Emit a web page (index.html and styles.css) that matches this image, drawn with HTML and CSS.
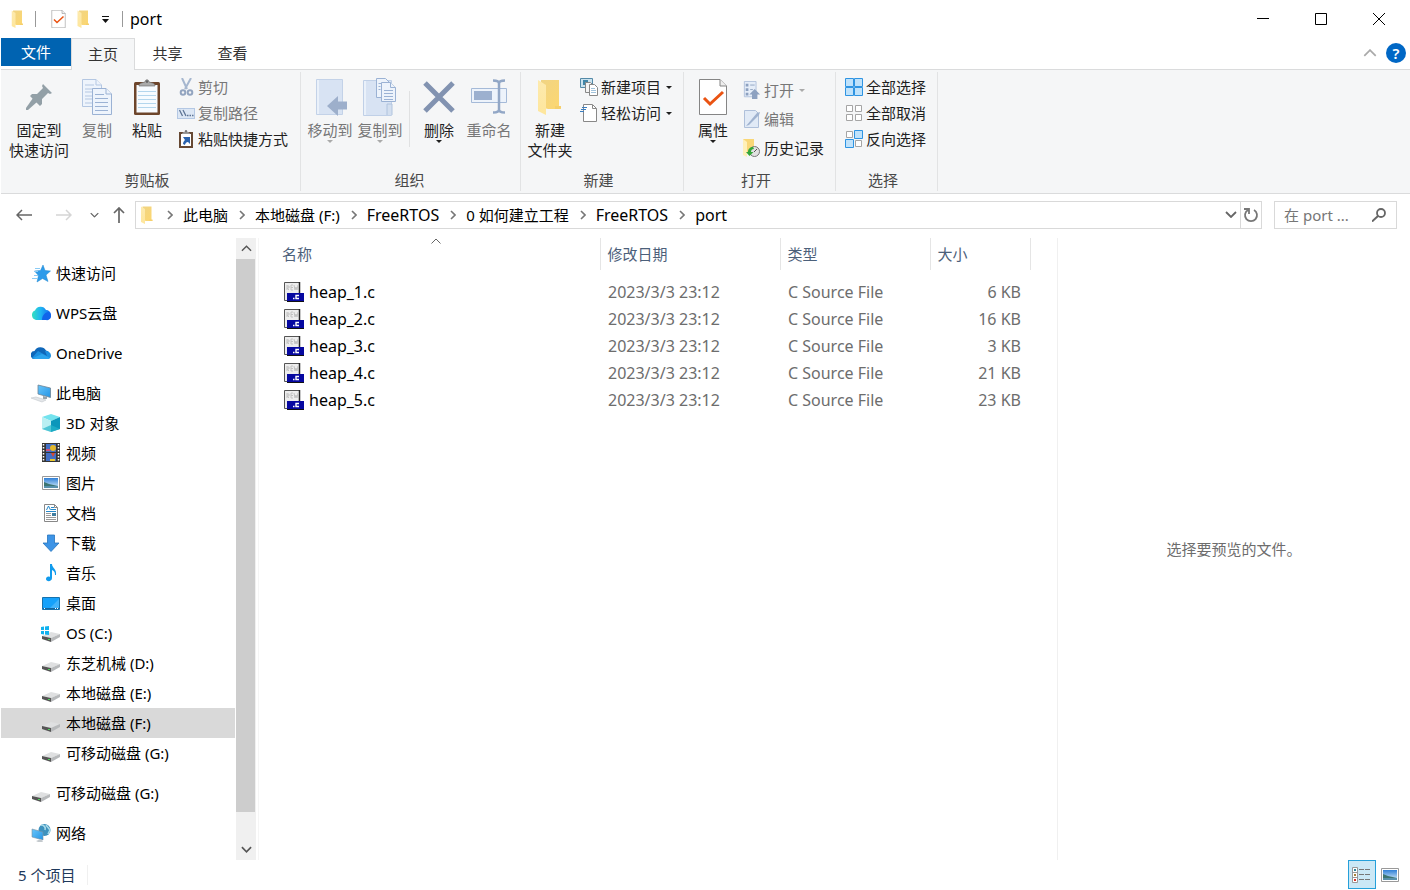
FILE: index.html
```html
<!DOCTYPE html>
<html lang="zh-CN">
<head>
<meta charset="utf-8">
<title>port</title>
<link rel="stylesheet" href="styles.css">
</head>
<body>
<svg class="sprite" width="0" height="0" aria-hidden="true">
  <defs>
    <linearGradient id="g-folder" x1="0" y1="0" x2="1" y2="1"><stop offset="0" stop-color="#f0d484"/><stop offset="1" stop-color="#fdd76f"/></linearGradient>
    <linearGradient id="g-fold" x1="0" y1="0" x2="0" y2="1"><stop offset="0" stop-color="#fdeaae"/><stop offset="1" stop-color="#fee69c"/></linearGradient>
    <linearGradient id="g-wps" x1="0" y1="0" x2="1" y2="0"><stop offset="0" stop-color="#35e0c0"/><stop offset=".45" stop-color="#1fb6f2"/><stop offset="1" stop-color="#1263ee"/></linearGradient>
    <linearGradient id="g-screen" x1="0" y1="0" x2="1" y2="1"><stop offset="0" stop-color="#69c6fb"/><stop offset="1" stop-color="#2494e4"/></linearGradient>
    <linearGradient id="g-sky" x1="0" y1="0" x2="0" y2="1"><stop offset="0" stop-color="#2f7fd6"/><stop offset="1" stop-color="#d9effb"/></linearGradient>
  </defs>
  <symbol id="i-folder" viewBox="0 0 24 36"><path d="M3 1H21V28H23V30H10L3 28Z" fill="url(#g-folder)"/><path d="M17 27h6v2l-2 1h-4z" fill="#f5cf6c"/><path d="M0 1L8 6V36L0 32Z" fill="url(#g-fold)"/></symbol>
  <symbol id="i-check-doc" viewBox="0 0 28 36"><path d="M.5.5H21L27.500 7V35.500H.5Z" fill="#fff" stroke="#858585"/><path d="M21 .5V7h6.500" fill="#eee" stroke="#858585"/><path d="M5 19l6 6L24 13" fill="none" stroke="#ea5312" stroke-width="3"/></symbol>
  <symbol id="i-down" viewBox="0 0 6 3"><path d="M0 0H6L3 3Z" fill="currentColor"/></symbol>
  <symbol id="i-chev" viewBox="0 0 6 10"><path d="M1 1l4 4-4 4" fill="none" stroke="#777" stroke-width="1.600"/></symbol>
  <symbol id="i-up-chev" viewBox="0 0 12 7"><path d="M1 6l5-5 5 5" fill="none" stroke="currentColor" stroke-width="1.500"/></symbol>
  <symbol id="i-down-chev" viewBox="0 0 12 7"><path d="M1 1l5 5 5-5" fill="none" stroke="currentColor" stroke-width="1.800"/></symbol>
  <symbol id="i-pin" viewBox="0 0 26 26"><g fill="#93a0a7"><path d="M17 0l9 9-2 1-2-1-6 6v5l-2 2L4 12l2-2h5l6-6-1-2z"/><path d="M7 14l4 4L2 26H0v-2z"/></g></symbol>
  <symbol id="i-copy" viewBox="0 0 30 36"><g fill="#eef4fc" stroke="#b4c7e2"><path d="M.5.5H14l5.500 5.500V27.500H.5Z"/><path d="M14 .5V6h5.500" /><path d="M3 6h9M3 10h13M3 13h7M3 17h7M3 20h7M3 24h7"/><path d="M10.500 9.500H24l5.500 5.500V35.500h-19Z" stroke="#9bb2d4"/><path d="M24 9.500V15h5.500M13 15.500h9M13 19.500h13M13 23.500h13M13 27.500h13M13 31.500h13" stroke="#9bb2d4"/></g></symbol>
  <symbol id="i-paste" viewBox="0 0 26 36"><rect x="0" y="3" width="26" height="33" rx="1.500" fill="#6d452b"/><rect x="2.500" y="6" width="21" height="27.500" fill="#f7fbff"/><path d="M4 12.500h18M4 16.500h18M4 20.500h18M4 24.500h18M4 28.500h18" stroke="#b4d6ed"/><path d="M5 7c0-3 3-3 6-4 0-3 4-3 4 0 3 1 6 1 6 4Z" fill="#aaa" stroke="#777" stroke-width=".7"/><circle cx="13" cy="2.600" r="1.300" fill="#666"/></symbol>
  <symbol id="i-cut" viewBox="0 0 18 18"><g fill="none" stroke="#93a5c0" stroke-width="2"><path d="M5 0l5 11M14 0L8 11" stroke="#a6b7cf"/><circle cx="6" cy="14.500" r="2.300"/><circle cx="13" cy="14.500" r="2.300"/></g></symbol>
  <symbol id="i-path" viewBox="0 0 18 18"><rect x=".5" y="4.500" width="17" height="10" fill="#dce7f5" stroke="#b4c8e4"/><path d="M2.500 6l3 6M6 6l3 6" stroke="#5e7596" stroke-width="1.300"/><path d="M10 11.500h1.500M12.500 11.500H14M15 11.500h1.500" stroke="#5e7596" stroke-width="1.500"/></symbol>
  <symbol id="i-shortcut" viewBox="0 0 18 18"><path d="M2 2h14v16H2z" fill="#664833"/><path d="M4 4h10v12H4z" fill="#fff"/><path d="M5 4c0-3 8-3 8 0z" fill="#999"/><circle cx="9" cy="1.200" r="1.200" fill="#777"/><path d="M6 7h7v7l-2-2c-2 0-3 2-3 3l-2-1c0-2 1-3 2-4z" fill="#2a62ad"/></symbol>
  <symbol id="i-move" viewBox="0 0 34 38"><path d="M3.500 1.500h26v35h-26z" fill="#d8e3f3" stroke="#c3d2e8"/><path d="M5 2v34" stroke="#eaf1fa" stroke-width="2"/><path d="M14 28l11-10v5.500h9v8h-9V38z" fill="#9dafcb"/></symbol>
  <symbol id="i-copyto" viewBox="0 0 34 38"><path d="M.5 2.500h28v35H.5z" fill="#d8e3f3" stroke="#c0d0e7"/><path d="M2 3v34" stroke="#eaf1fa" stroke-width="2"/><path d="M24 37V26h5v11" fill="#d3dfef" stroke="#b0c3de"/><g fill="#edf3fb" stroke="#9bb2d4"><path d="M13.500.5h9l4 4v15h-13z"/><path d="M18.500 4.500h9l5 5v14h-14z"/><path d="M27.500 4.500v5h5M21 12.500h9M21 15.500h9M21 18.500h9M21 21.500h9M15.500 5.500h3M15.500 8.500h2M15.500 11.500h2"/></g></symbol>
  <symbol id="i-delete" viewBox="0 0 32 32"><path d="M2 2l28 28M30 2L2 30" stroke="#8293b1" stroke-width="5"/></symbol>
  <symbol id="i-rename" viewBox="0 0 36 36"><path d="M.5 9.500h35v14H.5z" fill="#edf3fb" stroke="#a5bad8"/><path d="M3 12h18v9H3z" fill="#9cb0cf"/><path d="M28 4v27M22 1.500c3 0 6 0 6 3 0-3 3-3 6-3M22 33.500c3 0 6 0 6-3 0 3 3 3 6 3" fill="none" stroke="#92a7c6" stroke-width="2.500"/></symbol>
  <symbol id="i-newitem" viewBox="0 0 18 18"><path d="M.5.500h12v9H.5z" fill="#cbe3ef" stroke="#548aa8"/><path d="M3 2h5v5H3z" fill="#4186a8"/><path d="M5.500 4.500h5l3 3v7h-8z" fill="#f4f4f4" stroke="#888"/><path d="M9.500 6.500h5l3 3v8h-8z" fill="#fff" stroke="#888"/><path d="M11 10.500h4M11 12.500h5M11 14.500h5" stroke="#a1c3dc"/></symbol>
  <symbol id="i-easy" viewBox="0 0 18 18"><path d="M3.500.5h9l4 4v13h-13z" fill="#fff" stroke="#888"/><path d="M12.500 1v3.500h4" fill="none" stroke="#888"/><path d="M2 3.500h5M1 5.500h5M0 7.500h4" stroke="#3b7ec0"/></symbol>
  <symbol id="i-open" viewBox="0 0 18 20"><path d="M.5.500h13v17H.5z" fill="#e5edf8" stroke="#afc0da"/><path d="M2 3h3v3H2zM2 8h3v3H2zM2 13h3v3H2z" fill="#8da1c0"/><path d="M7 4.500h5M7 9.500h3" stroke="#8da1c0"/><path d="M12 9l6 6h-3v5H9v-5H6z" fill="#8da1c0"/></symbol>
  <symbol id="i-edit" viewBox="0 0 18 18"><path d="M1.500.5h11l3 3v14h-14z" fill="#e1eaf6" stroke="#afc0da"/><path d="M3 16L14 3l3-1-1 3L6 15z" fill="#a0b3d0"/></symbol>
  <symbol id="i-history" viewBox="0 0 18 18"><path d="M0 0h11v14H0z" fill="#f9d777"/><path d="M0 0l4 3v15l-4-2z" fill="#fff0b8"/><circle cx="11.500" cy="12.500" r="5" fill="#e1e1e1" stroke="#777"/><path d="M11 13l3-3" stroke="#555"/><path d="M10 8c-3 0-5 2-5 5H3l3.500 4 4-4H8c0-2 1-3 3-3z" fill="#34a638"/></symbol>
  <symbol id="i-all" viewBox="0 0 18 18"><g fill="#bfe2fb" stroke="#2f94e2"><path d="M.5.5h8v8h-8zM9.500.5h8v8h-8zM.5 9.500h8v8h-8zM9.500 9.500h8v8h-8z"/></g></symbol>
  <symbol id="i-none" viewBox="0 0 18 18"><g fill="#fff" stroke="#a5a5a5"><path d="M1.500 1.500h6v6h-6zM10.500 1.500h6v6h-6zM1.500 10.500h6v6h-6zM10.500 10.500h6v6h-6z"/></g></symbol>
  <symbol id="i-invert" viewBox="0 0 18 18"><g fill="#fff" stroke="#a5a5a5"><path d="M1.500 1.500h6v6h-6zM10.500 10.500h6v6h-6z"/></g><g fill="#bfe2fb" stroke="#2f94e2"><path d="M9.500.5h8v8h-8zM.5 9.500h8v8h-8z"/></g></symbol>
  <symbol id="i-star" viewBox="0 0 20 20"><path d="M12 2l2 5.500 5.500.5-4.500 4 2 6.500-5.500-3-5.500 3.500 1.500-6.500L3.500 8l6-.5z" fill="#2d9bea" stroke="#1c86d1" stroke-width=".5"/><path d="M4 5.500h5M3 8.500h4M1 15.500h6M3 12.500h4" stroke="#8acbf5"/></symbol>
  <symbol id="i-wps" viewBox="0 0 20 20"><path d="M5 17a5 5 0 0 1-1-9.500A6 6 0 0 1 15 7a5 5 0 0 1 0 10z" fill="url(#g-wps)"/><path d="M11 17c0-4 2-7 6-8a4 4 0 0 1-2 8z" fill="#1164ea"/></symbol>
  <symbol id="i-onedrive" viewBox="0 0 20 20"><path d="M4 16a4 4 0 0 1-.5-8A6.500 6.500 0 0 1 15 7.500 4.500 4.500 0 0 1 16 16z" fill="#0f67b9"/><path d="M7 8l9 5-2-5c4 0 6 2 6 5 0 2-2 3-4 3H4c-2 0-3-1-3-1z" fill="#1d8fe0"/><path d="M2 15l9-4 8 4c-1 1-2 1-3 1H4z" fill="#2ca4ee"/></symbol>
  <symbol id="i-pc" viewBox="0 0 20 20"><path d="M7 2l12.500 3v9.500L7 11z" fill="url(#g-screen)" stroke="#6f8494" stroke-width=".8"/><path d="M12 13l4 1v2h-4z" fill="#98a3aa"/><path d="M0 15l5-1 10 3-4 2z" fill="#e3e6e9" stroke="#c3c8cc" stroke-width=".6"/></symbol>
  <symbol id="i-3d" viewBox="0 0 20 20"><path d="M10 1l9 3-9 4-9-4z" fill="#74e3ee"/><path d="M1 4l9 4v11l-9-3z" fill="#b9eff2"/><path d="M19 4l-9 4v11l9-3z" fill="#0c97bb"/><path d="M1 16l9-4 9 4-9 3z" fill="#24b5ca" opacity=".7"/></symbol>
  <symbol id="i-video" viewBox="0 0 20 20"><path d="M1 0h18v19H1z" fill="#353535"/><path d="M2.500 1v18M17.500 1v18" stroke="#fff" stroke-width="1.500" stroke-dasharray="1.500 1.500"/><path d="M5 1h10v8H5zM5 10h10v8H5z" fill="#426fc5"/><circle cx="12" cy="5" r="3" fill="#e3b72b"/><path d="M5 6h4v2H5z" fill="#d1517b"/><path d="M10 10h4l-2 4z" fill="#d94a31"/><path d="M9 16h5v2H9z" fill="#e9c82f"/></symbol>
  <symbol id="i-pic" viewBox="0 0 20 20"><path d="M1.500 3.500h17v13h-17z" fill="#fff" stroke="#999"/><path d="M3 5h14v10H3z" fill="url(#g-sky)"/><path d="M3 9l5 2 9 2v2H3z" fill="#3c7572"/><path d="M3 13h14v2H3z" fill="#5790ab"/></symbol>
  <symbol id="i-doc" viewBox="0 0 20 20"><path d="M3.500 1.500h10l3 3v14h-13z" fill="#fff" stroke="#888"/><path d="M13.500 1.500v3h3" fill="none" stroke="#888"/><path d="M5.500 7l2-4 2 4" fill="none" stroke="#2588c9"/><path d="M10 4.500h3M10 6.500h5M5 8.500h10" stroke="#2588c9"/><path d="M5 10.500h5M5 12.500h5M5 14.500h10M5 16.500h10" stroke="#999"/><path d="M11 10h4v3h-4z" fill="#407ea0"/></symbol>
  <symbol id="i-download" viewBox="0 0 20 20"><path d="M6.500 2h7v8H18l-8 8.500L2 10h4.500z" fill="#3d94e6" stroke="#2674bc" stroke-width=".8"/></symbol>
  <symbol id="i-music" viewBox="0 0 20 20"><path d="M9 1h2c0 4 5 5 4 11h-1c0-3-1-4-3-5v8c0 4-6 4-6 1 0-2 2-3 4-2z" fill="#119bed"/></symbol>
  <symbol id="i-desktop" viewBox="0 0 20 20"><path d="M1.500 4.500h17v12h-17z" fill="#15a1fb" stroke="#1672ae"/><path d="M8 16L18 6v10z" fill="#42b3fb"/><path d="M2 15.500h16" stroke="#14659e"/><path d="M3 15.500h1M14 15.500h1M16 15.500h1" stroke="#fff"/></symbol>
  <symbol id="i-drive" viewBox="0 0 20 20"><path d="M1 13l9-4 9 2-9 4z" fill="#dfe0e1"/><path d="M1 13l9 2v4l-9-3z" fill="#555"/><path d="M10 15l9-4v3l-9 5z" fill="#b7b9bb"/><path d="M7 16.500h2" stroke="#4bd05b"/></symbol>
  <symbol id="i-osdrive" viewBox="0 0 20 20"><use href="#i-drive"/><path d="M0 4l3-.5v3.500H0zM4 3.500l4-.5v4H4zM0 8h3v3.500L0 11zM4 8h4v4l-4-.5z" fill="#11b2ef"/></symbol>
  <symbol id="i-net" viewBox="0 0 20 20"><circle cx="13.500" cy="7" r="6" fill="#3d91bd"/><path d="M10 2c3 0 5 2 4 5M15 2l4 5-2 4" fill="none" stroke="#a8dbe9" stroke-width="1.600"/><path d="M1 6l11 3v8L1 14z" fill="url(#g-screen)" stroke="#7a91a1" stroke-width=".6"/><path d="M5 18l5-2 2 3H7z" fill="#c3c9cd"/></symbol>
  <symbol id="i-cfile" viewBox="0 0 20 20"><path d="M.5.500h15v18H.5z" fill="#ededed" stroke="#555"/><path d="M15.500 0v12" stroke="#222" stroke-width="1.500"/><path d="M3 3v5M3 4h2v2H3l2 2M9 3H7v5h2M7 5.500h2M10 3l1 5 1-3 1 3 1-5" fill="none" stroke="#c2c2c2"/><path d="M3 11h17v8H3z" fill="#0608a0"/><path d="M3 19.500h17" stroke="#111"/><path d="M15 13.500h-3v3h3M9 16.500h1.500" fill="none" stroke="#fff" stroke-width="1.400"/></symbol>
</svg>

<div class="window">
  <header class="titlebar">
    <svg class="title-folder" viewBox="0 0 24 36"><use href="#i-folder"/></svg>
    <span class="bar"></span>
    <button class="quick" aria-label="属性"><svg width="15" height="18"><use href="#i-check-doc"/></svg></button>
    <button class="quick" aria-label="新建文件夹"><svg width="13" height="18"><use href="#i-folder"/></svg></button>
    <button class="quick-menu" aria-label="自定义快速访问工具栏"><svg width="7" height="7" viewBox="0 0 7 7"><path d="M0 .5h7" stroke="#111"/><path d="M0 3h7L3.500 7z" fill="#111"/></svg></button>
    <span class="bar"></span>
    <h1 class="title latin">port</h1>
    <div class="window-buttons">
      <button aria-label="最小化"><svg width="12" height="12"><path d="M0 5.500h12" stroke="#000"/></svg></button>
      <button aria-label="最大化"><svg width="12" height="12"><path d="M.5.500h11v11H.5z" fill="none" stroke="#000"/></svg></button>
      <button aria-label="关闭"><svg width="12" height="12"><path d="M0 0l12 12M12 0L0 12" stroke="#000"/></svg></button>
    </div>
  </header>

  <nav class="tabs">
    <button class="tab file">文件</button>
    <button class="tab active">主页</button>
    <button class="tab">共享</button>
    <button class="tab">查看</button>
    <div class="tab-tools">
      <button class="collapse" aria-label="折叠功能区"><svg width="14" height="8" viewBox="0 0 12 7"><use href="#i-up-chev"/></svg></button>
      <button class="help" aria-label="帮助">?</button>
    </div>
  </nav>

  <section class="ribbon">
    <div class="group clipboard">
      <div class="tools">
        <button class="big wide"><span class="pic"><svg width="26" height="26"><use href="#i-pin"/></svg></span><span>固定到<br>快速访问</span></button>
        <button class="big" disabled><span class="pic"><svg width="30" height="36"><use href="#i-copy"/></svg></span><span>复制</span></button>
        <button class="big"><span class="pic"><svg width="26" height="36"><use href="#i-paste"/></svg></span><span>粘贴</span></button>
        <div class="smalls">
          <button class="small" disabled><svg><use href="#i-cut"/></svg>剪切</button>
          <button class="small" disabled><svg><use href="#i-path"/></svg>复制路径</button>
          <button class="small"><svg><use href="#i-shortcut"/></svg>粘贴快捷方式</button>
        </div>
      </div>
      <div class="caption">剪贴板</div>
    </div>
    <div class="group organize">
      <div class="tools">
        <button class="big" disabled><span class="pic"><svg width="34" height="38"><use href="#i-move"/></svg></span><span>移动到</span><svg class="arrow"><use href="#i-down"/></svg></button>
        <button class="big" disabled><span class="pic"><svg width="34" height="38"><use href="#i-copyto"/></svg></span><span>复制到</span><svg class="arrow"><use href="#i-down"/></svg></button>
        <span class="split"></span>
        <button class="big"><span class="pic"><svg width="32" height="32"><use href="#i-delete"/></svg></span><span>删除</span><svg class="arrow"><use href="#i-down"/></svg></button>
        <button class="big" disabled><span class="pic"><svg width="36" height="36"><use href="#i-rename"/></svg></span><span>重命名</span></button>
      </div>
      <div class="caption">组织</div>
    </div>
    <div class="group">
      <div class="tools">
        <button class="big"><span class="pic"><svg width="24" height="36"><use href="#i-folder"/></svg></span><span>新建<br>文件夹</span></button>
        <div class="smalls">
          <button class="small"><svg><use href="#i-newitem"/></svg>新建项目<svg class="arrow"><use href="#i-down"/></svg></button>
          <button class="small"><svg><use href="#i-easy"/></svg>轻松访问<svg class="arrow"><use href="#i-down"/></svg></button>
        </div>
      </div>
      <div class="caption">新建</div>
    </div>
    <div class="group">
      <div class="tools">
        <button class="big"><span class="pic"><svg width="28" height="36"><use href="#i-check-doc"/></svg></span><span>属性</span><svg class="arrow"><use href="#i-down"/></svg></button>
        <div class="smalls loose">
          <button class="small" disabled><svg><use href="#i-open"/></svg>打开<svg class="arrow"><use href="#i-down"/></svg></button>
          <button class="small" disabled><svg><use href="#i-edit"/></svg>编辑</button>
          <button class="small"><svg><use href="#i-history"/></svg>历史记录</button>
        </div>
      </div>
      <div class="caption">打开</div>
    </div>
    <div class="group">
      <div class="tools">
        <div class="smalls">
          <button class="small"><svg><use href="#i-all"/></svg>全部选择</button>
          <button class="small"><svg><use href="#i-none"/></svg>全部取消</button>
          <button class="small"><svg><use href="#i-invert"/></svg>反向选择</button>
        </div>
      </div>
      <div class="caption">选择</div>
    </div>
  </section>

  <div class="address-row">
    <button class="go" aria-label="后退"><svg width="16" height="12" viewBox="0 0 16 12"><path d="M6 1L1 6l5 5M1 6h15" fill="none" stroke="#666" stroke-width="1.500"/></svg></button>
    <button class="go" aria-label="前进" disabled><svg width="16" height="12" viewBox="0 0 16 12"><path d="M10 1l5 5-5 5M15 6H0" fill="none" stroke="#d5d5d5" stroke-width="1.500"/></svg></button>
    <button class="go recent" aria-label="最近浏览的位置"><svg width="9" height="6" viewBox="0 0 12 7"><use href="#i-down-chev"/></svg></button>
    <button class="go parent" aria-label="上移"><svg width="12" height="16" viewBox="0 0 12 16"><path d="M1 6l5-5 5 5M6 1v15" fill="none" stroke="#666" stroke-width="1.700"/></svg></button>
    <div class="address">
      <svg class="crumb-folder" width="12" height="18"><use href="#i-folder"/></svg>
      <svg class="sep"><use href="#i-chev"/></svg><a href="#">此电脑</a>
      <svg class="sep"><use href="#i-chev"/></svg><a href="#">本地磁盘 (F:)</a>
      <svg class="sep"><use href="#i-chev"/></svg><a class="latin" href="#">FreeRTOS</a>
      <svg class="sep"><use href="#i-chev"/></svg><a href="#">0 如何建立工程</a>
      <svg class="sep"><use href="#i-chev"/></svg><a class="latin" href="#">FreeRTOS</a>
      <svg class="sep"><use href="#i-chev"/></svg><a class="latin" href="#">port</a>
      <button class="history" aria-label="以前的位置"><svg width="12" height="7"><use href="#i-down-chev"/></svg></button>
      <button class="refresh" aria-label="刷新"><svg width="16" height="16" viewBox="0 0 16 16"><path d="M11 3a6 6 0 1 1-6 0M1 2h5v5" fill="none" stroke="#777" stroke-width="1.800"/></svg></button>
    </div>
    <label class="search"><input type="text" placeholder="在 port ..." aria-label="搜索"><svg width="14" height="14" viewBox="0 0 14 14"><circle cx="9" cy="5" r="4" fill="none" stroke="#666" stroke-width="1.800"/><path d="M6 8l-6 5.500" stroke="#666" stroke-width="2"/></svg></label>
  </div>

  <main class="content">
    <aside class="tree">
      <ul>
        <li><a href="#"><svg><use href="#i-star"/></svg>快速访问</a></li>
        <li><a href="#"><svg><use href="#i-wps"/></svg>WPS云盘</a></li>
        <li><a href="#"><svg><use href="#i-onedrive"/></svg>OneDrive</a></li>
        <li><a href="#"><svg><use href="#i-pc"/></svg>此电脑</a>
          <ul>
            <li><a href="#"><svg><use href="#i-3d"/></svg>3D 对象</a></li>
            <li><a href="#"><svg><use href="#i-video"/></svg>视频</a></li>
            <li><a href="#"><svg><use href="#i-pic"/></svg>图片</a></li>
            <li><a href="#"><svg><use href="#i-doc"/></svg>文档</a></li>
            <li><a href="#"><svg><use href="#i-download"/></svg>下载</a></li>
            <li><a href="#"><svg><use href="#i-music"/></svg>音乐</a></li>
            <li><a href="#"><svg><use href="#i-desktop"/></svg>桌面</a></li>
            <li><a href="#"><svg><use href="#i-osdrive"/></svg>OS (C:)</a></li>
            <li><a href="#"><svg><use href="#i-drive"/></svg>东芝机械 (D:)</a></li>
            <li><a href="#"><svg><use href="#i-drive"/></svg>本地磁盘 (E:)</a></li>
            <li><a class="selected" href="#"><svg><use href="#i-drive"/></svg>本地磁盘 (F:)</a></li>
            <li><a href="#"><svg><use href="#i-drive"/></svg>可移动磁盘 (G:)</a></li>
          </ul>
        </li>
        <li><a href="#"><svg><use href="#i-drive"/></svg>可移动磁盘 (G:)</a></li>
        <li><a href="#"><svg><use href="#i-net"/></svg>网络</a></li>
      </ul>
    </aside>
    <div class="scrollbar">
      <button aria-label="向上滚动"><svg width="11" height="7"><use href="#i-up-chev"/></svg></button>
      <div class="track"><div class="thumb"></div></div>
      <button aria-label="向下滚动"><svg width="11" height="7"><use href="#i-down-chev"/></svg></button>
    </div>
    <section class="files">
      <table>
        <colgroup><col class="c-name"><col class="c-date"><col class="c-type"><col class="c-size"></colgroup>
        <thead><tr><th>名称<svg class="sort" width="10" height="6" viewBox="0 0 10 6"><path d="M.5 5.500L5 1l4.500 4.500" fill="none" stroke="#666"/></svg></th><th>修改日期</th><th>类型</th><th>大小</th></tr></thead>
        <tbody>
          <tr><td><span class="name"><svg><use href="#i-cfile"/></svg>heap_1.c</span></td><td>2023/3/3 23:12</td><td>C Source File</td><td>6 KB</td></tr>
          <tr><td><span class="name"><svg><use href="#i-cfile"/></svg>heap_2.c</span></td><td>2023/3/3 23:12</td><td>C Source File</td><td>16 KB</td></tr>
          <tr><td><span class="name"><svg><use href="#i-cfile"/></svg>heap_3.c</span></td><td>2023/3/3 23:12</td><td>C Source File</td><td>3 KB</td></tr>
          <tr><td><span class="name"><svg><use href="#i-cfile"/></svg>heap_4.c</span></td><td>2023/3/3 23:12</td><td>C Source File</td><td>21 KB</td></tr>
          <tr><td><span class="name"><svg><use href="#i-cfile"/></svg>heap_5.c</span></td><td>2023/3/3 23:12</td><td>C Source File</td><td>23 KB</td></tr>
        </tbody>
      </table>
    </section>
    <aside class="preview">选择要预览的文件。</aside>
  </main>

  <footer class="status">
    <span class="count">5 个项目</span>
    <button class="view on" aria-label="详细信息"><svg width="20" height="18" viewBox="0 0 20 18"><path d="M.5 1.500h5v15h-5zM.5 6.500h5M.5 11.500h5" fill="#fff" stroke="#999"/><path d="M2 3h2v2H2z" fill="#2e8399"/><path d="M2 8h2v2H2z" fill="#a88138"/><path d="M2 13h2v2H2z" fill="#d63328"/><path d="M7 3.500h5M13 3.500h5M7 8.500h5M13 8.500h5M7 13.500h5M13 13.500h5" stroke="#777"/></svg></button>
    <button class="view" aria-label="大缩略图"><svg width="20" height="20"><use href="#i-pic"/></svg></button>
  </footer>
</div>
</body>
</html>
```
FILE: styles.css
```css
* { box-sizing: border-box; }
body {
  margin: 0;
  background: #fff;
  color: #000;
  font: 15px/20px "Noto Sans", "Noto Sans CJK SC", sans-serif;
}
button {
  margin: 0;
  padding: 0;
  border: 0;
  background: none;
  color: inherit;
  font: inherit;
}
a { color: inherit; text-decoration: none; }
ul { margin: 0; padding: 0; list-style: none; }
svg { display: block; flex: none; }
.sprite { position: absolute; }
.latin { font-size: 16px; }

.window {
  display: flex;
  flex-direction: column;
  min-height: 100vh;
  padding-left: 1px;
}

.titlebar {
  display: flex;
  align-items: center;
  height: 38px;
  padding-left: 10px;
}
.title-folder { width: 13px; height: 18px; }
.bar { width: 1px; height: 16px; margin-left: 11px; background: #999; }
.quick { margin-left: 15px; }
.quick + .quick { margin-left: 11px; }
.quick-menu { margin-left: 12px; }
.quick-menu + .bar { margin-left: 13px; }
.title { margin: 0 0 0 7px; font-weight: 400; }
.window-buttons { display: flex; margin-left: auto; padding-right: 2px; }
.window-buttons button { display: grid; place-items: center; width: 58px; height: 38px; }

.tabs {
  display: flex;
  height: 32px;
  border-bottom: 1px solid #dadbdc;
  color: #333;
}
.tab { width: 65px; height: 31px; padding-bottom: 2px; }
.tab.file { width: 70px; height: 28px; padding: 0; background: #0063b1; color: #fff; }
.tab.active {
  width: 64px;
  height: 32px;
  border: 1px solid #dadbdc;
  border-bottom: 0;
  background: #f5f6f7;
}
.tab-tools { display: flex; align-items: center; gap: 9px; margin-left: auto; padding: 0 4px 1px 0; }
.collapse { color: #aaa; }
.help {
  width: 20px;
  height: 20px;
  border-radius: 50%;
  background: #0067c5;
  color: #fff;
  font-weight: 600;
}

.ribbon {
  display: flex;
  height: 124px;
  padding: 2px 0;
  border-bottom: 1px solid #dadbdc;
  background: #f5f6f7;
  color: #1f1f1f;
}
.group {
  display: flex;
  flex-direction: column;
  padding: 0 11px 0 4px;
  border-right: 1px solid #e2e3e4;
}
.group.clipboard { padding: 0 12px 0 5px; }
.group.organize { padding-right: 6px; }
.tools { display: flex; flex: 1; }
.caption { padding-bottom: 1px; color: #484848; text-align: center; }
.big {
  display: flex;
  flex-direction: column;
  align-items: center;
  width: 50px;
  white-space: nowrap;
}
.big.wide { width: 66px; }
.pic { display: grid; place-items: center; height: 48px; padding-top: 2px; }
.ribbon button:disabled { color: #777; }
.arrow { width: 6px; height: 3px; }
.smalls { display: flex; flex-direction: column; gap: 6px; padding: 5px 0 0 5px; }
.smalls.loose { gap: 9px; padding-top: 8px; }
.small { display: flex; align-items: center; gap: 3px; white-space: nowrap; }
.small svg { width: 18px; height: 18px; }
.small .arrow { width: 6px; height: 3px; margin-left: 2px; }
.small:disabled .arrow { color: #aaa; }
.big:disabled .arrow { color: #aaa; }
.split { width: 1px; height: 56px; margin: 19px 4px 0; background: #e0e1e2; }

.address-row {
  display: flex;
  align-items: center;
  height: 43px;
  padding: 0 13px 1px 3px;
}
.go { display: grid; place-items: center; width: 40px; height: 28px; color: #666; }
.go.recent { width: 20px; }
.go.parent { width: 30px; }
.address {
  display: flex;
  flex: 1;
  align-items: center;
  height: 28px;
  margin-left: 1px;
  padding: 0 0 1px 5px;
  border: 1px solid #d9d9d9;
}
.sep { width: 6px; height: 10px; margin: 0 10px 0 11px; }
.crumb-folder + .sep { margin-left: 14px; }
.history { margin-left: auto; padding: 0 3px; color: #666; }
.refresh { display: grid; place-items: center; width: 21px; height: 26px; margin-bottom: -1px; border-left: 1px solid #d9d9d9; }
.search {
  display: flex;
  align-items: center;
  width: 123px;
  height: 28px;
  margin-left: 12px;
  padding: 0 10px 0 9px;
  border: 1px solid #d9d9d9;
}
.search input {
  flex: 1;
  min-width: 0;
  padding: 0;
  border: 0;
  outline: 0;
  font: inherit;
}
.search input::placeholder { color: #767676; }

.content { display: flex; flex: 1; padding-top: 1px; }
.tree { width: 234px; padding-top: 20px; }
.tree > ul { display: flex; flex-direction: column; gap: 10px; }
.tree a {
  display: flex;
  align-items: center;
  gap: 5px;
  height: 30px;
  padding-left: 30px;
}
.tree ul ul a { padding-left: 40px; }
.tree svg { width: 20px; height: 20px; }
.tree .selected { background: #d9d9d9; }
.scrollbar {
  display: flex;
  flex-direction: column;
  width: 20px;
  margin: 0 2px 0 1px;
  background: #f0f0f0;
  color: #555;
}
.scrollbar button { display: grid; place-items: center; height: 21px; }
.track { flex: 1; padding-bottom: 27px; }
.thumb { width: 19px; height: 100%; background: #cdcdcd; }

.files { flex: 1; padding-left: 16px; border-left: 1px solid #f5f5f5; }
.files table { border-collapse: collapse; table-layout: fixed; width: 755px; color: #6d6d6d; font-size: 16px; }
.c-name { width: 325px; }
.c-date { width: 180px; }
.c-type { width: 150px; }
.c-size { width: 100px; }
.files th {
  position: relative;
  height: 32px;
  padding: 0 7px;
  border-right: 1px solid #e5e5e5;
  color: #4c607a;
  font-size: 15px;
  font-weight: 400;
  text-align: left;
}
.sort { position: absolute; top: 0; left: 48%; }
.files td { height: 27px; padding: 0 8px; }
.files tbody::before { content: ""; display: block; height: 8px; }
.files td:last-child { padding-right: 9px; text-align: right; }
.name { display: flex; align-items: center; gap: 5px; padding-left: 1px; color: #000; }
.name svg { width: 20px; height: 20px; }
.preview {
  display: grid;
  place-items: center;
  width: 353px;
  border-left: 1px solid #f0f0f0;
  color: #6d6d6d;
}

.status {
  display: flex;
  align-items: center;
  height: 30px;
  padding: 0 6px 1px 17px;
  color: #1e395b;
}
.count { margin-right: auto; padding-right: 12px; border-right: 1px solid #f0f0f0; }
.view { display: grid; place-items: center; width: 28px; height: 29px; }
.view.on { border: 1px solid #26a0da; background: #cbe8f6; }
```
